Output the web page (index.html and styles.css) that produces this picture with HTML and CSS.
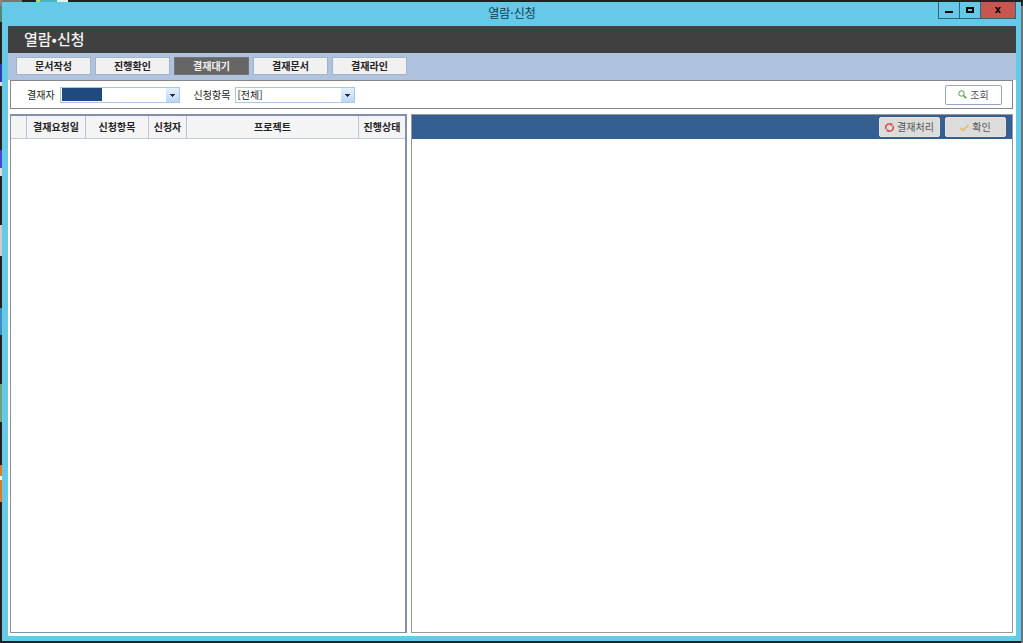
FILE: index.html
```html
<!DOCTYPE html>
<html lang="ko">
<head>
<meta charset="utf-8">
<title>열람·신청</title>
<link rel="stylesheet" href="styles.css">
</head>
<body>
<div class="window">
  <header class="titlebar">
    <span class="titlebar-text">열람·신청</span>
    <div class="window-controls">
      <button class="wc" type="button" aria-label="최소화"><svg width="10" height="10" viewBox="0 0 10 10"><path d="M1 6h8v2H1z"/></svg></button>
      <button class="wc" type="button" aria-label="최대화"><svg width="10" height="10" viewBox="0 0 10 10"><path fill-rule="evenodd" d="M1 2h8v6H1zM3 4v2h4V4z"/></svg></button>
      <button class="wc wc-close" type="button" aria-label="닫기"><svg width="10" height="10" viewBox="0 0 10 10"><path d="M2 2h2l1 2 1-2h2L6 5l2 3H6L5 6 4 8H2l2-3z"/></svg></button>
    </div>
  </header>
  <main class="client">
    <h1 class="heading">열람•신청</h1>
    <nav class="tabs">
      <button class="tab" type="button">문서작성</button>
      <button class="tab" type="button">진행확인</button>
      <button class="tab tab-active" type="button">결재대기</button>
      <button class="tab" type="button">결재문서</button>
      <button class="tab" type="button">결재라인</button>
    </nav>
    <div class="content">
      <form class="search">
        <label class="search-label" for="approver">결재자</label>
        <span class="combo">
          <select id="approver"><option></option></select>
          <span class="selection"></span>
          <svg class="combo-arrow" width="13" height="14" viewBox="0 0 13 14"><path d="M4 6h5v1H8v1H7v1H6V8H5V7H4z"/></svg>
        </span>
        <label class="search-label search-label-next" for="item">신청항목</label>
        <span class="combo">
          <select id="item"><option>[전체]</option></select>
          <svg class="combo-arrow" width="13" height="14" viewBox="0 0 13 14"><path d="M4 6h5v1H8v1H7v1H6V8H5V7H4z"/></svg>
        </span>
        <button class="btn btn-search" type="button"><svg width="9" height="9" viewBox="0 0 9 9" fill="none" stroke="#4f9a45"><circle cx="3.500" cy="3.500" r="2.700"/><path d="M5.500 5.500L8.300 8.300" stroke-width="1.500"/></svg>조회</button>
      </form>
      <div class="panels">
        <section class="list">
          <table class="grid">
            <colgroup><col class="c-mark"><col class="c-date"><col class="c-item"><col class="c-user"><col><col class="c-state"></colgroup>
            <thead><tr><th></th><th>결재요청일</th><th>신청항목</th><th>신청자</th><th>프로젝트</th><th>진행상태</th></tr></thead>
          </table>
        </section>
        <section class="detail">
          <div class="toolbar">
            <button class="btn btn-tool" type="button"><svg width="9" height="9" viewBox="0 0 9 9" fill="none" stroke="#d8403c" stroke-width="1.400"><path d="M1.200 6.200A3.500 3.500 0 0 1 5.800 1.300M7.800 2.800A3.500 3.500 0 0 1 3.200 7.700"/><path d="M5 0L8 1 6 3.200zM4 9L1 8 3 5.800z" fill="#d8403c" stroke="none"/></svg>결재처리</button>
            <button class="btn btn-tool" type="button"><svg width="9" height="9" viewBox="0 0 9 9" fill="none" stroke="#ecb64e" stroke-width="1.400"><path d="M0.500 5l2.500 2.500L8.500 2"/></svg>확인</button>
          </div>
        </section>
      </div>
    </div>
  </main>
</div>
</body>
</html>
```
FILE: styles.css
```css
* { box-sizing: border-box; }

body {
  margin: 0;
  height: 100vh;
  padding: 2px;
  display: flex;
  background:
    linear-gradient(to bottom, #8c8585 0 6px, #4f8878 6px 22px, #222 22px 64px, #2c3fae 64px 82px, #ddd 82px 86px, #222 86px 150px, #4747d0 150px 168px, #ddd 168px 176px, #222 176px 225px, #ccc 225px 256px, #222 256px 308px, #3d8fc0 308px 335px, #222 335px 384px, #6ea17c 384px 422px, #222 422px 465px, #e07830 465px 476px, #fff 476px 480px, #e07830 480px 502px, #222 502px) left / 2px 100% no-repeat,
    linear-gradient(to right, #777 0 22px, #222 22px 36px, #dccb4b 36px 40px, #4cb5c3 40px 57px, #eee 57px 68px, #222 68px) top / 100% 2px no-repeat,
    linear-gradient(to bottom, #222 0 6px, #6b7378 6px) right / 2px 100% no-repeat,
    #24202b;
  font-family: "Noto Sans CJK KR", sans-serif;
  font-size: 10px;
  color: #222;
}

button, select { font: inherit; color: inherit; margin: 0; }
svg { flex: none; }

.window {
  flex: 1;
  display: flex;
  flex-direction: column;
  background: #65cae8;
  padding: 0 5px 5px 6px;
}

.titlebar {
  display: grid;
  grid-template-columns: 1fr auto 1fr;
  height: 24px;
}

.titlebar-text {
  grid-column: 2;
  font-size: 12px;
  line-height: 22px;
  color: #123c50;
}

.window-controls {
  justify-self: end;
  display: flex;
  height: 17px;
  border: 1px solid #336578;
  border-top: 0;
}

.wc {
  width: 21px;
  padding: 0;
  border: 0;
  border-right: 1px solid #336578;
  background: none;
  display: flex;
  align-items: center;
  justify-content: center;
}

.wc-close {
  width: 34px;
  border-right: 0;
  background: #c75650;
}

.client {
  flex: 1;
  display: flex;
  flex-direction: column;
  background: #fff;
}

.heading {
  margin: 0;
  padding-left: 16px;
  height: 27px;
  background: #404040;
  color: #f2f2f2;
  font-size: 15px;
  font-weight: 500;
  line-height: 26px;
}

.tabs {
  display: flex;
  gap: 4px;
  height: 27px;
  padding: 4px 8px;
  background: #b0c3de;
}

.tab {
  width: 75px;
  height: 18px;
  padding: 0;
  border: 1px solid #a2b2c8;
  background: #f1f1f1;
  font-weight: 700;
  line-height: 16px;
}

.tab-active {
  background: #666;
  border-color: #757575;
  color: #f2f2f2;
}

.content {
  flex: 1;
  display: flex;
  flex-direction: column;
  gap: 5px;
  padding: 0 3px 3px 2px;
}

.search {
  display: flex;
  align-items: center;
  height: 29px;
  padding: 0 10px 0 16px;
  border: 1px solid #858585;
}

.search-label { margin-right: 5px; }
.search-label-next { margin-left: 14px; }

.combo {
  position: relative;
  width: 120px;
  height: 16px;
}

.combo select {
  appearance: none;
  display: block;
  width: 100%;
  height: 100%;
  padding: 0 14px 0 1px;
  border: 1px solid #a9c7e6;
  border-radius: 0;
  background: #fff;
  line-height: 14px;
}

.selection {
  position: absolute;
  left: 2px;
  top: 1px;
  width: 40px;
  height: 13px;
  background: #1e4a80;
  pointer-events: none;
}

.combo-arrow {
  position: absolute;
  right: 1px;
  top: 1px;
  background: linear-gradient(#e4f0ff, #bcd6f6);
  fill: #24303f;
  pointer-events: none;
}

.btn {
  display: flex;
  align-items: center;
  justify-content: center;
  gap: 3px;
  height: 20px;
  padding: 0;
  border: 1px solid #e4e4e4;
  border-radius: 2px;
  color: #555;
  line-height: 16px;
}

.btn-search {
  width: 57px;
  margin-left: auto;
  border-color: #94a5c6;
  background: #fff;
}

.panels {
  flex: 1;
  display: grid;
  grid-template-columns: 397fr 602fr;
  gap: 4px;
}

.list {
  border: 2px solid #8290ae;
  border-left-width: 1px;
  border-bottom-width: 1px;
}

.grid {
  width: 100%;
  table-layout: fixed;
  border-collapse: separate;
  border-spacing: 0;
}

.grid th {
  height: 23px;
  padding: 0;
  border-right: 1px solid #b8c5d8;
  border-bottom: 1px solid #c4ccd8;
  background: #f4f4f4;
  font-weight: 700;
  line-height: 20px;
  white-space: nowrap;
}

.grid th:last-child { border-right: 0; }

.c-mark { width: 16px; }
.c-date { width: 59px; }
.c-item { width: 63px; }
.c-user { width: 38px; }
.c-state { width: 46px; }

.detail { border: 1px solid #999; }

.toolbar {
  display: flex;
  align-items: center;
  justify-content: flex-end;
  gap: 5px;
  height: 24px;
  padding-right: 6px;
  background: #365f91;
}

.btn-tool {
  width: 61px;
  background: #dcdcdc;
}
```
